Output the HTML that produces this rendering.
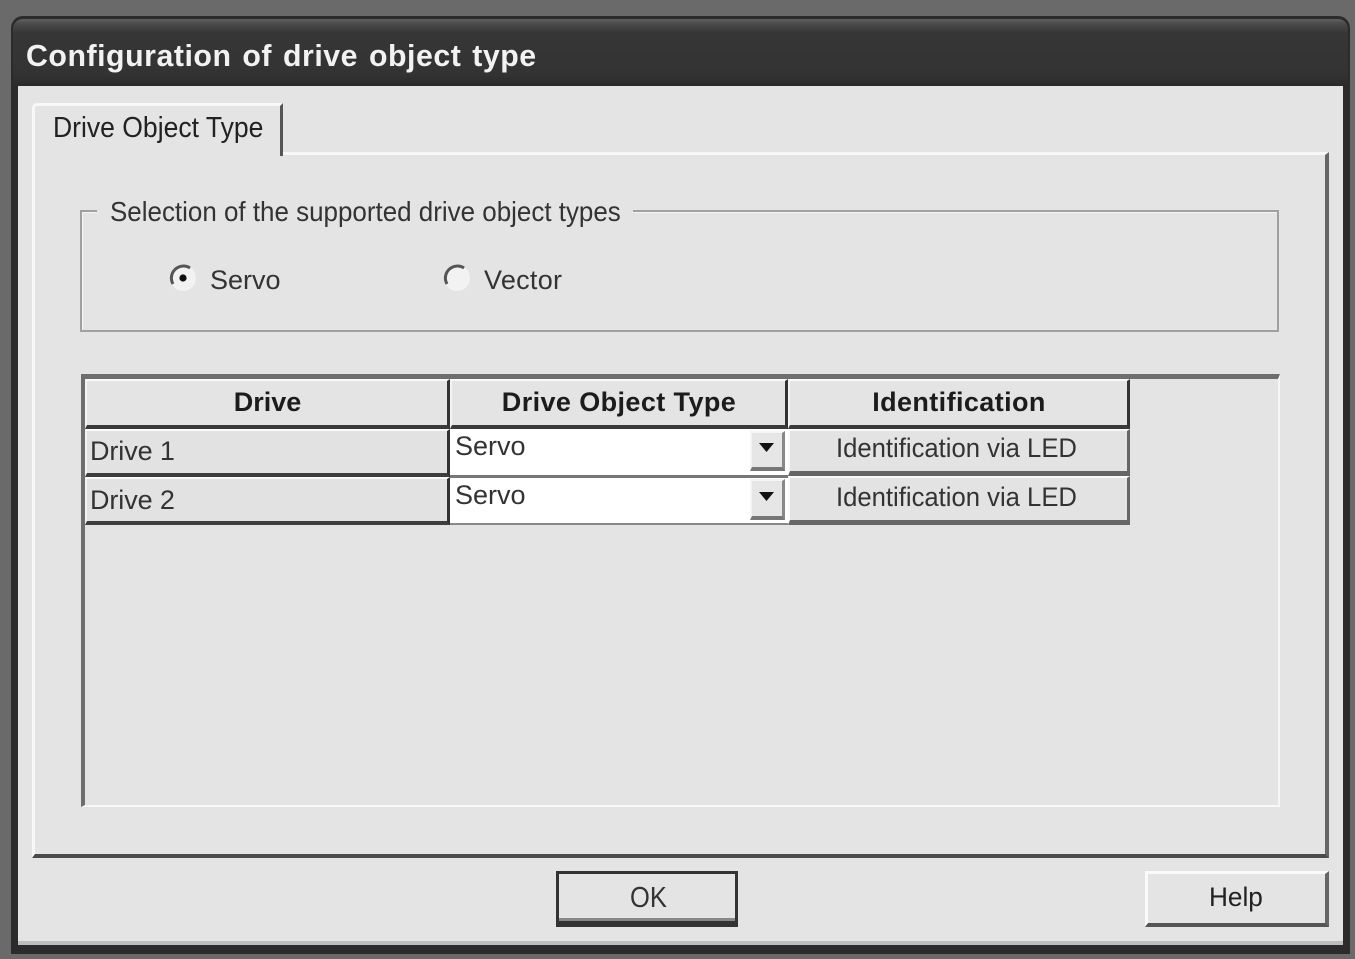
<!DOCTYPE html>
<html>
<head>
<meta charset="utf-8">
<style>
html,body{margin:0;padding:0;width:1355px;height:959px;overflow:hidden;background:#6a6a6a;}
body{position:relative;font-family:"Liberation Sans",sans-serif;color:#222;}
div{position:absolute;box-sizing:border-box;}
.t{white-space:nowrap;line-height:1;font-size:27px;color:#2a2a2a;filter:blur(.35px);}
.b{font-weight:bold;color:#1c1c1c;text-align:center;}
.hd{background:#e4e4e4;border-top:2px solid #fafafa;border-left:2px solid #f4f4f4;border-right:3px solid #333;border-bottom:4px solid #3a3a3a;}
.rh{background:#e2e2e2;border-top:2px solid #fafafa;border-left:2px solid #f4f4f4;border-right:3px solid #333;border-bottom:4px solid #3e3e3e;}
.cell{background:#fff;}
.dd{background:#e6e6e6;border-top:2px solid #f5f5f5;border-left:2px solid #f5f5f5;border-right:3px solid #888;border-bottom:4px solid #777;}
.btn{background:#e3e3e3;border-top:2px solid #fafafa;border-left:2px solid #fafafa;border-right:3px solid #666;border-bottom:5px solid #666;}
</style>
</head>
<body>
<!-- window frame -->
<div style="left:11px;top:16px;width:1339px;height:938px;background:#2b2b2b;border-radius:12px 12px 0 0;"></div>
<div style="left:13px;top:19px;width:1335px;height:67px;background:linear-gradient(#606060 0,#4a4a4a 5px,#363636 14px,#333 55px,#2a2a2a 100%);border-radius:10px 10px 0 0;"></div>
<div class="t" style="left:26px;top:40px;font-size:31px;font-weight:bold;color:#f2f2f2;letter-spacing:.55px;word-spacing:2px;transform-origin:left top;transform:scaleX(.977);">Configuration of drive object type</div>
<!-- client -->
<div style="left:18px;top:86px;width:1325px;height:859px;background:#e4e4e4;"></div>
<div style="left:18px;top:941px;width:1325px;height:4px;background:#bdbdbd;"></div>

<!-- tab page -->
<div style="left:32px;top:152px;width:1297px;height:706px;border-top:3px solid #f8f8f8;border-left:3px solid #f8f8f8;border-right:4px solid #666;border-bottom:4px solid #4a4a4a;"></div>
<!-- tab -->
<div style="left:32px;top:103px;width:251px;height:53px;background:#e4e4e4;border-top:3px solid #f8f8f8;border-left:3px solid #f8f8f8;border-right:3px solid #555;border-radius:5px 0 0 0;"></div>
<div style="left:35px;top:150px;width:245px;height:6px;background:#e4e4e4;"></div>
<div class="t" style="left:53px;top:114px;font-size:29px;color:#222;transform-origin:left top;transform:scaleX(.915);">Drive Object Type</div>

<!-- group -->
<div style="left:80px;top:210px;width:1199px;height:122px;border:2px solid #a0a0a0;box-shadow:inset 1px 1px 0 #f4f4f4;"></div>
<div style="left:97px;top:200px;width:536px;height:24px;background:#e4e4e4;"></div>
<div class="t" style="left:110px;top:198px;font-size:28px;color:#333;transform-origin:left top;transform:scaleX(.927);white-space:nowrap;">Selection of the supported drive object types</div>

<!-- radios -->
<svg style="position:absolute;left:166px;top:260px;" width="34" height="34" viewBox="0 0 34 34">
<circle cx="17" cy="18" r="13" fill="#f2f2f2"/>
<path d="M7 24 A12 12 0 0 1 24 8" fill="none" stroke="#555" stroke-width="3"/>
<circle cx="17" cy="18" r="3.6" fill="#111"/>
</svg>
<div class="t" style="left:210px;top:267px;color:#333;">Servo</div>
<svg style="position:absolute;left:440px;top:260px;" width="34" height="34" viewBox="0 0 34 34">
<circle cx="17" cy="18" r="13" fill="#f2f2f2"/>
<path d="M7 24 A12 12 0 0 1 24 8" fill="none" stroke="#555" stroke-width="3"/>
</svg>
<div class="t" style="left:484px;top:267px;color:#333;letter-spacing:.3px;">Vector</div>

<!-- grid -->
<div style="left:81px;top:374px;width:1199px;height:433px;border-top:5px solid #6e6e6e;border-left:4px solid #6e6e6e;border-right:2px solid #f6f6f6;border-bottom:2px solid #f8f8f8;"></div>

<div class="hd" style="left:85px;top:379px;width:365px;height:50px;"></div>
<div class="hd" style="left:450px;top:379px;width:338px;height:50px;"></div>
<div class="hd" style="left:788px;top:379px;width:342px;height:50px;"></div>
<div class="t b" style="left:85px;top:389px;width:365px;">Drive</div>
<div class="t b" style="left:450px;top:389px;width:338px;letter-spacing:.4px;">Drive Object Type</div>
<div class="t b" style="left:788px;top:389px;width:342px;letter-spacing:.4px;">Identification</div>

<div class="rh" style="left:85px;top:429px;width:365px;height:48px;"></div>
<div class="rh" style="left:85px;top:477px;width:365px;height:48px;"></div>
<div class="t" style="left:90px;top:438px;letter-spacing:-.1px;color:#333;">Drive 1</div>
<div class="t" style="left:90px;top:487px;letter-spacing:-.1px;color:#333;">Drive 2</div>

<div class="cell" style="left:450px;top:429px;width:338px;height:47px;"></div>
<div style="left:450px;top:475px;width:338px;height:3px;background:#777;"></div>
<div class="cell" style="left:450px;top:478px;width:338px;height:46px;"></div>
<div style="left:450px;top:523px;width:338px;height:2px;background:#888;"></div>
<div class="t" style="left:455px;top:433px;color:#333;">Servo</div>
<div class="t" style="left:455px;top:482px;color:#333;">Servo</div>

<div class="dd" style="left:750px;top:431px;width:35px;height:40px;"></div>
<div class="dd" style="left:750px;top:479px;width:35px;height:41px;"></div>
<svg style="position:absolute;left:759px;top:443px;" width="15" height="9"><path d="M0 0H15L7.5 9Z" fill="#111"/></svg>
<svg style="position:absolute;left:759px;top:492px;" width="15" height="9"><path d="M0 0H15L7.5 9Z" fill="#111"/></svg>

<div class="btn" style="left:788px;top:429px;width:342px;height:47px;"></div>
<div class="btn" style="left:788px;top:476px;width:342px;height:49px;"></div>
<div class="t" style="left:836px;top:435px;color:#333;transform-origin:left top;transform:scaleX(.95);">Identification via LED</div>
<div class="t" style="left:836px;top:484px;color:#333;transform-origin:left top;transform:scaleX(.95);">Identification via LED</div>

<!-- buttons -->
<div style="left:556px;top:871px;width:182px;height:56px;background:#e4e4e4;border:3px solid #333;border-bottom:6px solid #333;box-shadow:inset 0 -3px 0 #888;"></div>
<div class="t" style="left:630px;top:884px;color:#333;font-size:29px;transform-origin:left top;transform:scaleX(.88);">OK</div>
<div style="left:1145px;top:871px;width:184px;height:56px;background:#e4e4e4;border-top:3px solid #fafafa;border-left:3px solid #fafafa;border-right:4px solid #666;border-bottom:4px solid #555;"></div>
<div class="t" style="left:1209px;top:884px;color:#222;transform-origin:left top;transform:scaleX(.97);">Help</div>
</body>
</html>
